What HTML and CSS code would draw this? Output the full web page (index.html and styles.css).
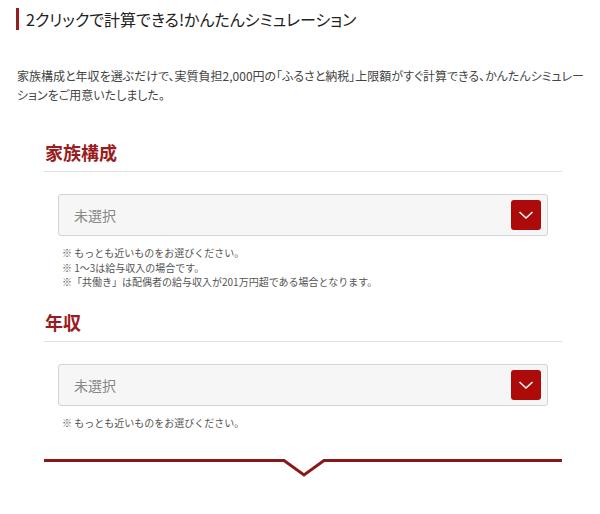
FILE: index.html
```html
<!DOCTYPE html>
<html lang="ja">
<head>
<meta charset="utf-8">
<link rel="stylesheet" href="styles.css">
</head>
<body>
<h1 class="title">2クリックで計算できる!かんたんシミュレーション</h1>
<p class="lead">家族構成と年収を選ぶだけで、実質負担2,000円の「ふるさと納税」上限額がすぐ計算できる、かんたんシミュレーションをご用意いたしました。</p>
<div class="sim">
  <section class="field">
    <h2 class="field-title">家族構成</h2>
    <div class="select">
      <span class="select-text">未選択</span>
      <span class="select-btn"><svg width="16" height="10" viewBox="0 0 16 10"><path d="M1.5 2 L8 8 L14.5 2" fill="none" stroke="#fff" stroke-width="1.6"/></svg></span>
    </div>
    <ul class="notes">
      <li>※ もっとも近いものをお選びください。</li>
      <li>※ 1～3は給与収入の場合です。</li>
      <li>※「共働き」は配偶者の給与収入が201万円超である場合となります。</li>
    </ul>
  </section>
  <section class="field">
    <h2 class="field-title">年収</h2>
    <div class="select">
      <span class="select-text">未選択</span>
      <span class="select-btn"><svg width="16" height="10" viewBox="0 0 16 10"><path d="M1.5 2 L8 8 L14.5 2" fill="none" stroke="#fff" stroke-width="1.6"/></svg></span>
    </div>
    <ul class="notes">
      <li>※ もっとも近いものをお選びください。</li>
    </ul>
  </section>
  <div class="divider">
    <svg width="518" height="20" viewBox="0 0 518 20"><path d="M0 3.5 H240 L260 18 L280 3.5 H518" fill="none" stroke="#8b1818" stroke-width="3"/></svg>
  </div>
</div>
</body>
</html>
```
FILE: styles.css
```css
body {
  margin: 0;
  background: #fff;
  font-family: "Noto Sans CJK JP", "Noto Sans", sans-serif;
  color: #333;
}
.title {
  margin: 8px 0 0 16px;
  padding-left: 7px;
  border-left: 3px solid #9b1c1c;
  font-size: 16px;
  font-weight: normal;
  line-height: 22px;
  color: #222;
  font-feature-settings: "palt";
}
.lead {
  margin: 36px 10px 0 17px;
  font-size: 12px;
  line-height: 19px;
  color: #444;
  font-feature-settings: "palt";
}
.sim {
  margin: 35px 38px 0 44px;
}
.field-title {
  margin: 0;
  padding-left: 1px;
  font-size: 18px;
  line-height: 26px;
  font-weight: bold;
  color: #9b1c1c;
  padding-bottom: 6px;
  border-bottom: 1px solid #e0e0e0;
}
.field + .field {
  margin-top: 19px;
}
.select {
  margin: 22px 14px 0 14px;
  height: 42px;
  box-sizing: border-box;
  border: 1px solid #d4d4d4;
  border-radius: 3px;
  background: #f6f6f6;
  display: flex;
  align-items: center;
  justify-content: space-between;
  padding: 0 6px 0 15px;
}
.select-text {
  font-size: 14px;
  color: #888;
}
.select-btn {
  width: 30px;
  height: 30px;
  border-radius: 3px;
  background: #ad0a0a;
  display: flex;
  align-items: center;
  justify-content: center;
}
.notes {
  list-style: none;
  margin: 10px 0 0 18px;
  padding: 0;
  font-size: 10px;
  line-height: 14.5px;
  color: #555;
}
.divider {
  margin-top: 27px;
  line-height: 0;
}
```
